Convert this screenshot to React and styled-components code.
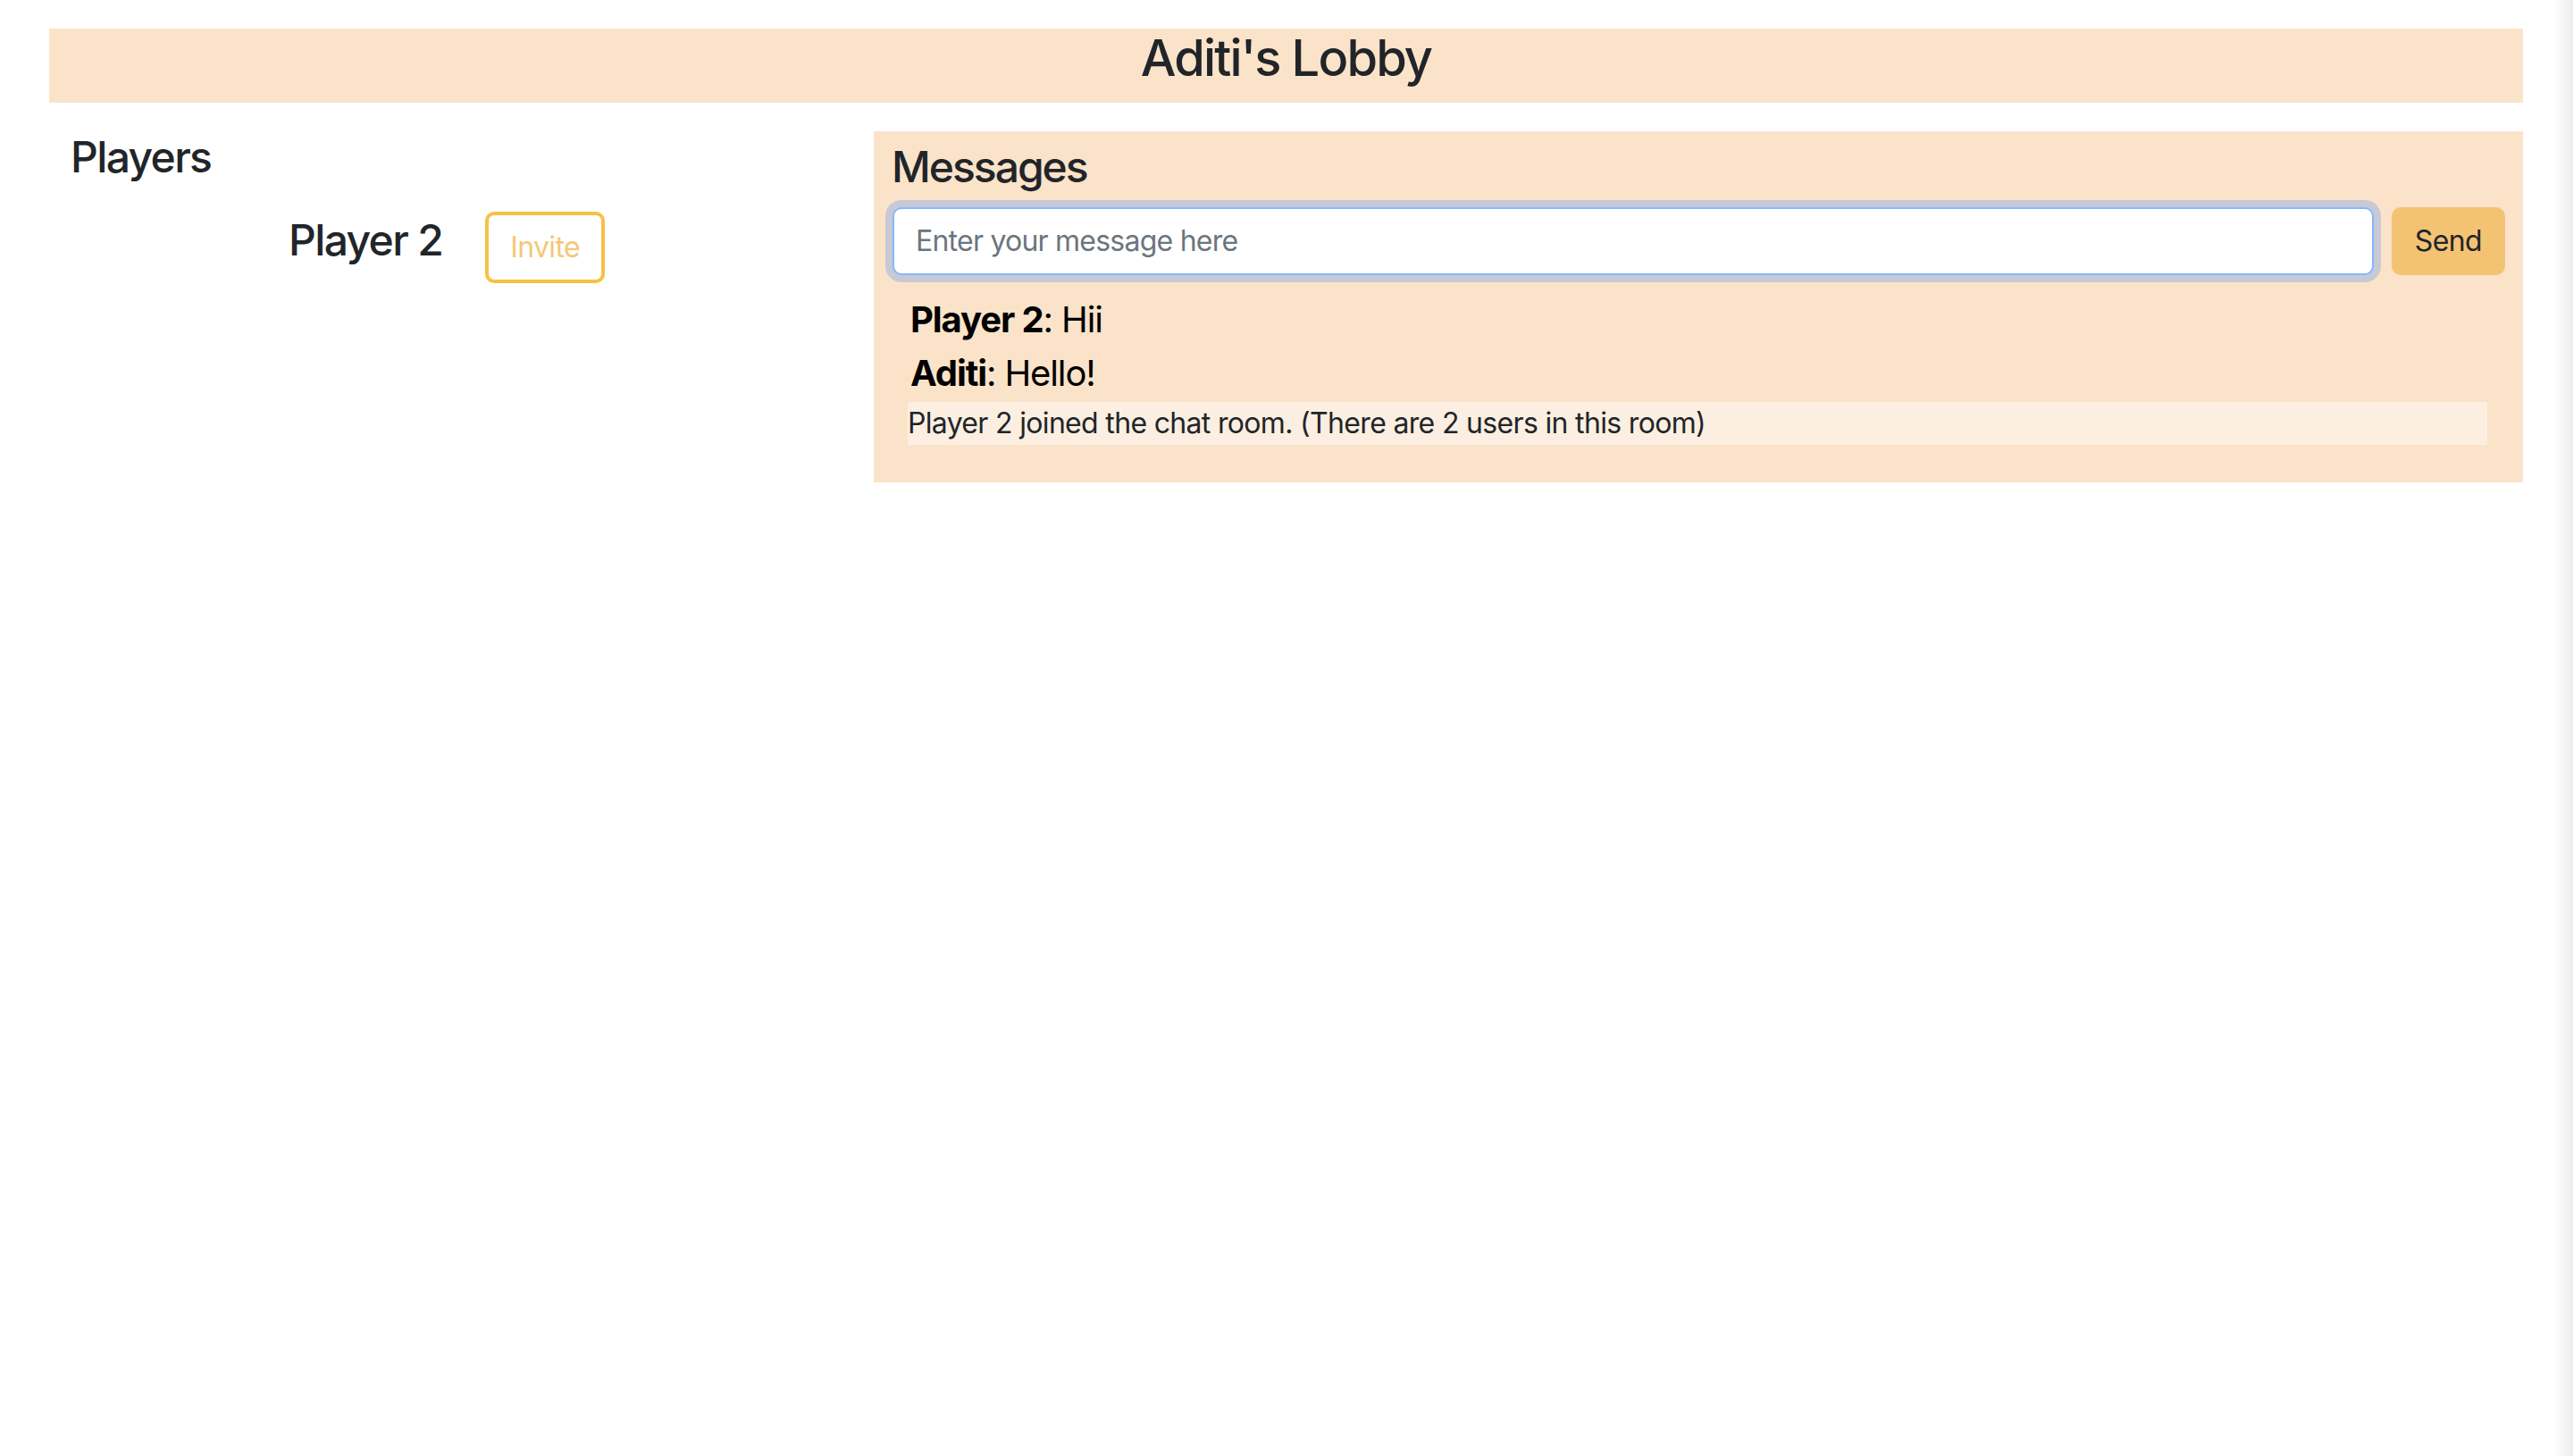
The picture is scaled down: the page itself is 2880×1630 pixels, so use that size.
import React from "react";
import styled, { createGlobalStyle } from "styled-components";

const GlobalStyle = createGlobalStyle`
  html, body {
    margin: 0;
    padding: 0;
    background: #ffffff;
  }
  body {
    font-family: Inter, "Noto Sans", "Liberation Sans", sans-serif;
    color: #212529;
    -webkit-font-smoothing: antialiased;
  }
  * { box-sizing: border-box; }
`;

const Page = styled.div`
  padding: 32px 56px 0 55px;
`;

const Header = styled.header`
  background: #fae3c9;
  text-align: center;
  padding-bottom: 16px;
`;

const Title = styled.h3`
  margin: 0;
  font-size: 56px;
  font-weight: 500;
  line-height: 1.2;
  letter-spacing: -0.033em;
  color: #212529;
`;

const Main = styled.main`
  display: grid;
  grid-template-columns: 1fr 2fr;
  align-items: start;
  margin-top: 32px;
`;

const PlayersColumn = styled.section`
  padding: 0 24px;
`;

const SectionTitle = styled.h4`
  margin: 0 0 16px;
  font-size: 48px;
  font-weight: 500;
  line-height: 1.2;
  letter-spacing: ${(p) => (p.$tight ? "-0.042em" : "-0.034em")};
  color: #212529;
`;

const PlayerRow = styled.div`
  display: flex;
  align-items: center;
  gap: 48px;
  padding-top: 16px;
  padding-left: 244px;
`;

const PlayerName = styled.h4`
  margin: 0 0 16px;
  font-size: 48px;
  font-weight: 500;
  line-height: 1.2;
  letter-spacing: -0.034em;
  color: #212529;
`;

const BaseButton = styled.button`
  font-family: inherit;
  font-size: 32px;
  font-weight: 400;
  line-height: 48px;
  letter-spacing: -0.02em;
  padding: 12px 24px;
  border-radius: 10px;
  cursor: pointer;
`;

const InviteButton = styled(BaseButton)`
  background: #ffffff;
  border: 4px solid #f6c244;
  color: #f4c877;
`;

const SendButton = styled(BaseButton)`
  background: #f3c373;
  border: 2px solid #f3c373;
  color: #212529;
  flex: none;
`;

const MessagesPanel = styled.section`
  background: #fae3c9;
  padding: 11px 20px 42px;
`;

const InputRow = styled.div`
  display: flex;
  align-items: center;
  gap: 20px;
`;

const MessageInput = styled.input`
  flex: 1;
  min-width: 0;
  height: 76px;
  margin-left: 1px;
  padding: 12px 24px;
  font-family: inherit;
  font-size: 32px;
  line-height: 48px;
  letter-spacing: -0.024em;
  color: #212529;
  background: #ffffff;
  border: 2px solid #86b7fe;
  border-radius: 10px;
  outline: none;
  box-shadow: 0 0 0 8px #c8c9d6;
  &::placeholder {
    color: #6c757d;
  }
`;

const MessageList = styled.div`
  margin: 20px 20px 0 18px;
`;

const ChatLine = styled.p`
  margin: 0;
  padding-left: 3px;
  font-size: 40px;
  line-height: 1.5;
  letter-spacing: -0.028em;
  color: #000000;
  b {
    font-weight: 700;
  }
`;

const SystemLine = styled.p`
  margin: 2px 0 0;
  font-size: 32px;
  line-height: 48px;
  letter-spacing: -0.021em;
  color: #212529;
  background: #fcefe1;
`;

const ScrollShade = styled.div`
  position: fixed;
  top: 0;
  right: 0;
  bottom: 0;
  width: 22px;
  pointer-events: none;
  background: linear-gradient(to right, rgba(255,255,255,0), #ececec);
`;

const messages = [
  { from: "Player 2", text: "Hii" },
  { from: "Aditi", text: "Hello!" },
];

export default function App() {
  return (
    <>
      <GlobalStyle />
      <Page>
        <Header>
          <Title>Aditi's Lobby</Title>
        </Header>
        <Main>
          <PlayersColumn>
            <SectionTitle>Players</SectionTitle>
            <PlayerRow>
              <PlayerName>Player 2</PlayerName>
              <InviteButton>Invite</InviteButton>
            </PlayerRow>
          </PlayersColumn>
          <MessagesPanel>
            <SectionTitle $tight>Messages</SectionTitle>
            <InputRow>
              <MessageInput placeholder="Enter your message here" />
              <SendButton>Send</SendButton>
            </InputRow>
            <MessageList>
              {messages.map((m, i) => (
                <ChatLine key={i}>
                  <b>{m.from}</b>: {m.text}
                </ChatLine>
              ))}
              <SystemLine>
                Player 2 joined the chat room. (There are 2 users in this room)
              </SystemLine>
            </MessageList>
          </MessagesPanel>
        </Main>
      </Page>
      <ScrollShade />
    </>
  );
}
